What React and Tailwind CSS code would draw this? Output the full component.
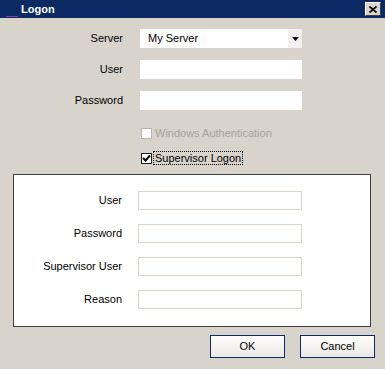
const font = "font-['Tahoma','Liberation_Sans',Arial,sans-serif]";

const Field = ({ label, labelW, gap, inputW, boxClass }) => (
  <div className="flex items-center h-[19px]" style={{ columnGap: gap }}>
    <div className="text-right text-black" style={{ width: labelW }}>{label}</div>
    <div className={`h-[19px] bg-white ${boxClass}`} style={{ width: inputW }}></div>
  </div>
);

const Check = ({ checked, disabled, focus, children }) => (
  <div className="flex items-center h-[14px] pl-[141px]">
    <div className={`w-[11px] h-[11px] border bg-white flex items-center justify-center ${disabled ? 'border-[#b8b4ac]' : 'border-[#1c1c1c]'}`}>
      {checked && (
        <svg width="9" height="9" viewBox="0 0 9 9">
          <path d="M1 4 L3.5 6.5 L8 1.5" fill="none" stroke="#000" strokeWidth="2" />
        </svg>
      )}
    </div>
    <span className={`ml-[2px] px-[1px] leading-[12px] ${disabled ? 'text-[#a7a39b]' : 'text-black'} ${focus ? 'outline outline-1 outline-dotted outline-black' : ''}`}>
      {children}
    </span>
  </div>
);

export default function App() {
  return (
    <div className={`w-[385px] h-[369px] bg-[#d8d4cb] text-[11px] flex flex-col ${font}`}>
      {/* title bar */}
      <div className="h-[18px] bg-[#0b2962] flex items-center relative shrink-0">
        <span className="ml-[21px] text-white font-bold text-[11px]">Logon</span>
        <div className="absolute left-[6px] bottom-[1px] w-[12px] h-[1px] bg-[#8a3ab0]"></div>
        <div className="ml-auto mr-[4px] w-[16px] h-[14px] bg-[#d8d4cb] border border-t-white border-l-white border-r-[#404040] border-b-[#404040] flex items-center justify-center">
          <svg width="8" height="7" viewBox="0 0 8 7">
            <path d="M0.5 0.5 L7.5 6.5 M7.5 0.5 L0.5 6.5" stroke="#000" strokeWidth="1.6" />
          </svg>
        </div>
      </div>

      {/* main fields */}
      <div className="flex flex-col gap-[12px] mt-[11px]">
        <div className="flex items-center h-[19px] gap-[17px]">
          <div className="w-[123px] text-right text-black">Server</div>
          <div className="w-[162px] h-[19px] bg-white flex items-center">
            <span className="ml-[8px] text-black">My Server</span>
            <div className="ml-auto w-[14px] h-[19px] bg-[#f2f0ee] flex items-center justify-center">
              <svg width="7" height="4" viewBox="0 0 7 4">
                <path d="M0 0 H7 L3.5 4 Z" fill="#000" />
              </svg>
            </div>
          </div>
        </div>
        <Field label="User" labelW={123} gap={17} inputW={162} boxClass="" />
        <Field label="Password" labelW={123} gap={17} inputW={162} boxClass="" />
      </div>

      <div className="flex flex-col gap-[11px] mt-[16px]">
        <Check disabled>Windows Authentication</Check>
        <Check checked focus>Supervisor Logon</Check>
      </div>

      {/* supervisor panel */}
      <div className="mt-[9px] ml-[13px] w-[358px] h-[153px] bg-white border border-[#404040] flex flex-col gap-[14px] pt-[16px]">
        <Field label="User" labelW={108} gap={16} inputW={164} boxClass="border border-[#ddd3c8]" />
        <Field label="Password" labelW={108} gap={16} inputW={164} boxClass="border border-[#ddd3c8]" />
        <Field label="Supervisor User" labelW={108} gap={16} inputW={164} boxClass="border border-[#ddd3c8]" />
        <Field label="Reason" labelW={108} gap={16} inputW={164} boxClass="border border-[#ddd3c8]" />
      </div>

      {/* buttons */}
      <div className="flex justify-end gap-[15px] mt-[8px] mr-[10px]">
        <button className="w-[75px] h-[23px] border border-[#0b2a6b] bg-gradient-to-b from-white to-[#ebe8e3] text-black text-[11px]">OK</button>
        <button className="w-[75px] h-[23px] border border-[#0b2a6b] bg-gradient-to-b from-white to-[#ebe8e3] text-black text-[11px]">Cancel</button>
      </div>
    </div>
  );
}
